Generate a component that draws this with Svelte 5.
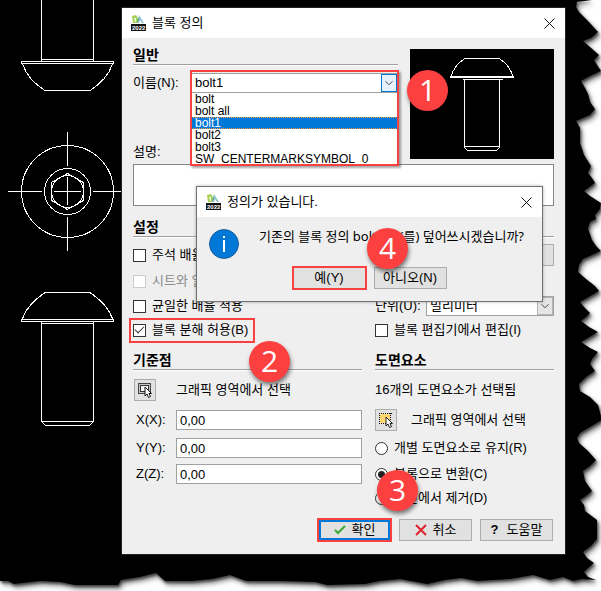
<script lang="ts">
  const blocks = ['bolt', 'bolt all', 'bolt1', 'bolt2', 'bolt3', 'SW_CENTERMARKSYMBOL_0'];
  const axes = ['X', 'Y', 'Z'];

  let name = $state('bolt1');
  let explode = $state(true);
  let mode = $state('convert');
  let base = $state({ X: '0,00', Y: '0,00', Z: '0,00' });
</script>

{#snippet logo()}
  <svg class="logo" viewBox="0 0 15 17" width="15" height="17" aria-hidden="true">
    <path d="M1 1l4-1q3 3 1 8H2z" fill="#a5d052" />
    <path d="M3 3l2 0 0 4-1 0z" fill="#eef7dc" />
    <path d="M8 0l5 8h-2l-2-3-1 3H6z" fill="#8fc3cf" />
    <path d="M7 2l1 3-2 3z" fill="#4da36b" />
    <rect x="0" y="9" width="15" height="7" fill="#111" />
    <text x="1" y="15" font-size="6" font-weight="700" fill="#fff">2022</text>
  </svg>
{/snippet}

{#snippet cross()}
  <svg viewBox="0 0 11 11" width="11" height="11" aria-hidden="true">
    <path d="M0.5 0.5l10 10M10.5 0.5l-10 10" stroke="#111" fill="none" />
  </svg>
{/snippet}

<main class="stage">
  <svg class="torn" viewBox="0 0 601 591" preserveAspectRatio="none" aria-hidden="true">
    <path
      d="M0 0H592L577 2 576 7 579 12 588 21 598 32 591 38 583 41 590 47 599 55 594 60 597 65 601 71 590 76 581 81 585 88 588 94 590 102 595 109 590 115 576 121 580 128 580 143 584 155 591 166 588 173 592 178 595 183 584 191 590 196 601 203 600 209 595 215 596 219 590 222 588 229 592 240 596 246 601 251 592 255 583 259 579 265 578 272 586 279 595 286 599 291 587 298 580 302 584 307 590 313 586 317 581 321 589 327 598 332 588 338 581 342 590 348 598 352 592 359 590 364 595 371 586 377 579 384 580 391 590 397 598 405 602 420 590 427 580 433 577 438 579 443 588 451 596 460 590 466 583 471 585 481 592 491 586 496 580 500 584 505 585 511 597 520 597 539 591 546 583 552 587 558 594 563 588 568 584 572 588 577 596 580 582 579 573 581 563 577 550 580 533 575 510 579 477 581 461 578 445 580 427 584 400 579 380 581 365 584 327 585 315 582 280 581 246 581 230 575 212 579 192 581 165 581 156 573 140 577 121 580 118 585 75 585 60 582 40 581 14 584 8 581H0z"
    />
  </svg>

  <svg class="drawing" viewBox="0 0 122 440" width="122" height="440" aria-hidden="true">
    <path d="M41.5 0V60.5M93.5 0V60.5M41 59.5H94M21.5 61.5H113.5V63.5H21.5zM22.5 64Q28 80 45 90.5H90Q107 80 112.5 64" />
    <circle cx="67.5" cy="191.5" r="46" />
    <circle cx="67.5" cy="191.5" r="23" />
    <circle cx="67.5" cy="191.5" r="16" />
    <path d="M67.5 173.5L83.5 182.5V200.5L67.5 209.5 51.5 200.5V182.5z" />
    <path d="M67.5 132V166M67.5 177V205M67.5 217V251M8 191.5H42M54 191.5H81M93 191.5H122" />
    <path d="M22.5 319Q26 306 45 292.5H90Q109 306 112.5 319M21.5 319.5H113.5V321.5H21.5zM41.5 321V421.5L45.5 425.5H89.5L93.5 421.5V321M41 323.5H94M41 421.5H94" />
  </svg>

  <section class="dialog" aria-label="블록 정의">
    <header class="titlebar">
      {@render logo()}
      <span>블록 정의</span>
      <button class="close" type="button" aria-label="닫기">{@render cross()}</button>
    </header>

    <div class="body">
      <div class="general">
        <div>
          <h2>일반</h2>
          <div class="name-row">
            <label for="name">이름(N):</label>
            <div class="combo">
              <select id="name" bind:value={name}>
                {#each blocks as block}
                  <option>{block}</option>
                {/each}
              </select>
              <svg class="arrow hot" viewBox="0 0 16 18" aria-hidden="true">
                <path d="M4 7l4 4 4-4" />
              </svg>
              <ul role="listbox" aria-label="이름">
                {#each blocks as block}
                  <li role="option" aria-selected={block === name}>{block}</li>
                {/each}
              </ul>
            </div>
          </div>
          <label class="desc-label" for="desc">설명:</label>
        </div>
        <svg class="preview" viewBox="0 0 144 110" aria-hidden="true">
          <path d="M41 28Q44 16 55 9.5H89Q100 16 103 28M53 29.5V30.5H92V29.5M54.5 31V98.5L57.5 101.5H86.5L89.5 98.5V31M54 97.5H90" />
          <path d="M40 28H104" stroke-width="2" />
        </svg>
      </div>
      <textarea id="desc"></textarea>

      <div class="columns settings">
        <div>
          <h2>설정</h2>
          <div class="rows">
            <label><input type="checkbox" />주석 배율</label>
            <label class="disabled"><input type="checkbox" disabled />시트와 일치</label>
            <label><input type="checkbox" />균일한 배율 적용</label>
            <label class="marked"><input type="checkbox" bind:checked={explode} />블록 분해 허용(B)</label>
          </div>
        </div>
        <div>
          <h2></h2>
          <div class="rows">
            <button class="push link" type="button" aria-label="하이퍼링크"></button>
            <span></span>
            <div class="unit">
              <label for="unit">단위(U):</label>
              <div class="combo">
                <select id="unit"><option>밀리미터</option></select>
                <svg class="arrow" viewBox="0 0 16 18" aria-hidden="true">
                  <path d="M4 7l4 4 4-4" />
                </svg>
              </div>
            </div>
            <label><input type="checkbox" />블록 편집기에서 편집(I)</label>
          </div>
        </div>
      </div>

      <div class="columns origin">
        <div>
          <h2>기준점</h2>
          <div class="rows">
            <div class="pick">
              <button class="push tool" type="button" aria-label="기준점 선택">
                <svg viewBox="0 0 16 16" width="16" height="16" aria-hidden="true">
                  <rect x="1.5" y="1.5" width="12" height="10" fill="#c4c8ca" stroke="#444" />
                  <rect x="3.5" y="3.5" width="8" height="6" fill="#f7f7f7" stroke="#333" />
                  <path d="M8 5v9l2-2 1.5 3.5 2-1-1.5-3h2.5z" fill="#fff" stroke="#111" />
                </svg>
              </button>
              <span>그래픽 영역에서 선택</span>
            </div>
            {#each axes as axis}
              <div class="axis">
                <label for={`axis-${axis}`}>{axis}({axis}):</label>
                <input id={`axis-${axis}`} type="text" bind:value={base[axis]} />
              </div>
            {/each}
          </div>
        </div>
        <div>
          <h2>도면요소</h2>
          <div class="rows">
            <p>16개의 도면요소가 선택됨</p>
            <div class="pick near">
              <button class="push tool" type="button" aria-label="도면요소 선택">
                <svg viewBox="0 0 16 16" width="16" height="16" aria-hidden="true">
                  <rect x="2" y="2" width="10" height="9" fill="#ffd76e" />
                  <path d="M1 1.5H14M1 11.5H14M1.5 1V12M12.5 1V12" fill="none" stroke="#111" stroke-dasharray="1 1" shape-rendering="crispEdges" />
                  <path d="M8 5v9l2-2 1.5 3.5 2-1-1.5-3h2.5z" fill="#fff" stroke="#222" />
                </svg>
              </button>
              <span>그래픽 영역에서 선택</span>
            </div>
            <label><input type="radio" value="keep" bind:group={mode} />개별 도면요소로 유지(R)</label>
            <label><input type="radio" value="convert" bind:group={mode} />블록으로 변환(C)</label>
            <label><input type="radio" value="remove" bind:group={mode} />도면에서 제거(D)</label>
          </div>
        </div>
      </div>

      <footer>
        <button class="push primary" type="button">
          <svg viewBox="0 0 12 10" width="12" height="10" aria-hidden="true">
            <path d="M1 5l3 3 7-7" fill="none" stroke="#3aa935" stroke-width="2" />
          </svg>
          확인
        </button>
        <button class="push" type="button">
          <svg viewBox="0 0 12 12" width="12" height="12" aria-hidden="true">
            <path d="M1 1l10 10M11 1L1 11" stroke="#e1202c" stroke-width="2" />
          </svg>
          취소
        </button>
        <button class="push" type="button"><b>?</b>도움말</button>
      </footer>
    </div>

    <section class="confirm" role="alertdialog" aria-label="정의가 있습니다.">
      <header class="titlebar">
        {@render logo()}
        <span>정의가 있습니다.</span>
        <button class="close" type="button" aria-label="닫기">{@render cross()}</button>
      </header>
      <div class="message">
        <svg viewBox="0 0 30 30" width="30" height="30" aria-hidden="true">
          <circle cx="15" cy="15" r="14.5" fill="#0078d7" stroke="#1c5f9c" />
          <path d="M14 7h2v2h-2zM14 11h2v12h-2z" fill="#fff" />
        </svg>
        <p>기존의 블록 정의 bolt1 을(를) 덮어쓰시겠습니까?</p>
      </div>
      <div class="answers">
        <button class="push yes" type="button">예(Y)</button>
        <button class="push" type="button">아니오(N)</button>
      </div>
    </section>

    <span class="badge one">1</span>
    <span class="badge two">2</span>
    <span class="badge three">3</span>
    <span class="badge four">4</span>
  </section>
</main>

<style>
  :global(body) {
    margin: 0;
    background: #fff;
  }

  .stage {
    position: relative;
    overflow: hidden;
    padding: 8px 36px 37px 122px;
    font: 13px/20px "Liberation Sans", "Noto Sans CJK KR", sans-serif;
    color: #000;
  }

  .stage *,
  .stage *::after {
    box-sizing: border-box;
  }

  .torn {
    position: absolute;
    inset: 0;
    width: 100%;
    height: 100%;
    filter: drop-shadow(1px 2px 1px rgb(0 0 0 / 50%)) drop-shadow(2px 3px 2px rgb(0 0 0 / 50%));
  }

  .drawing {
    position: absolute;
    left: 0;
    top: 0;
  }

  .drawing,
  .preview {
    fill: none;
    stroke: #fff;
    shape-rendering: crispEdges;
  }

  .dialog {
    position: relative;
    background: #efefef;
    box-shadow: 0 0 0 1px #222;
  }

  .titlebar {
    display: flex;
    align-items: center;
    gap: 6px;
    height: 30px;
    padding: 0 10px 0 9px;
    background: #fff;
    white-space: nowrap;
  }

  .close {
    display: flex;
    margin-left: auto;
    padding: 0;
    border: 0;
    background: none;
  }

  .body {
    padding: 9px 11px 13px;
  }

  h2 {
    height: 18px;
    margin: 0;
    border-bottom: 1px solid #a0a0a0;
    box-shadow: 0 1px #fff;
    font-size: 14px;
    line-height: 16px;
    font-weight: 700;
  }

  p {
    margin: 0;
  }

  label {
    white-space: nowrap;
  }

  .general {
    display: grid;
    grid-template-columns: 1fr 144px;
    gap: 12px;
  }

  .preview {
    width: 144px;
    height: 110px;
    margin-top: 2px;
    background: #000;
  }

  .name-row {
    display: grid;
    grid-template-columns: 58px 1fr;
    margin-top: 8px;
  }

  .combo {
    position: relative;
    height: 20px;
  }

  .name-row .combo::after {
    content: '';
    position: absolute;
    z-index: 2;
    inset: -3px -1px -73px;
    border: 2px solid #fa4040;
    box-shadow: 2px 2px 2px rgb(0 0 0 / 35%);
    pointer-events: none;
  }

  select,
  input[type='text'],
  textarea {
    display: block;
    width: 100%;
    height: 20px;
    margin: 0;
    padding: 0 3px;
    border: 1px solid #a0a0a0;
    border-radius: 0;
    background: #fff;
    color: inherit;
    font: inherit;
    line-height: 18px;
    appearance: none;
  }

  textarea {
    height: 42px;
    margin-top: 2px;
    border-color: #85858d;
    resize: none;
  }

  .arrow {
    position: absolute;
    top: 1px;
    right: 1px;
    width: 16px;
    height: 18px;
    border: 1px solid #b5b5b5;
    background: #e5e5e5;
    fill: none;
    stroke: #333;
    pointer-events: none;
  }

  .arrow.hot {
    border-color: #0078d7;
    background: #e5f1fb;
  }

  ul {
    position: absolute;
    z-index: 1;
    top: 20px;
    left: 0;
    right: 0;
    margin: 0;
    padding: 0;
    background: #fff;
    list-style: none;
    font-size: 12px;
    line-height: 12px;
  }

  li {
    height: 12px;
    padding-left: 4px;
  }

  li[aria-selected='true'] {
    background: #0078d7;
    outline: 1px dotted #ff9a3c;
    outline-offset: -1px;
    color: #fff;
  }

  .desc-label {
    display: block;
    margin-top: 49px;
  }

  .columns {
    display: grid;
    grid-template-columns: 229fr 179fr;
    gap: 13px;
  }

  .settings {
    margin-top: 13px;
  }

  .origin {
    margin-top: 10px;
  }

  .rows {
    display: grid;
    padding-top: 5px;
    align-items: center;
  }

  .settings .rows {
    grid-template-rows: 26px 26px 24px 24px;
  }

  .origin .rows {
    grid-template-rows: 30px 30px 26px 26px 22px;
  }

  .rows > label {
    display: flex;
    align-items: center;
    gap: 6px;
  }

  .disabled {
    color: #8c8c8c;
  }

  .marked {
    position: relative;
  }

  .marked::after {
    content: '';
    position: absolute;
    inset: -2px auto -3px -4px;
    width: 126px;
    border: 2px solid #fa4040;
  }

  input[type='checkbox'],
  input[type='radio'] {
    display: grid;
    place-items: center;
    flex: none;
    width: 13px;
    height: 13px;
    margin: 0;
    border: 1px solid #333;
    background: #fff;
    appearance: none;
  }

  input[type='radio'] {
    border-radius: 50%;
  }

  input[type='checkbox']:disabled {
    border-color: #ccc;
  }

  input[type='checkbox']:checked::after {
    content: '';
    width: 9px;
    height: 5px;
    margin-bottom: 3px;
    border: solid #333;
    border-width: 0 0 1px 1px;
    transform: rotate(-45deg);
  }

  input[type='radio']:checked::after {
    content: '';
    width: 7px;
    height: 7px;
    border-radius: 50%;
    background: #222;
  }

  .push {
    display: flex;
    align-items: center;
    justify-content: center;
    gap: 6px;
    width: 73px;
    height: 22px;
    padding: 0;
    border: 1px solid #adadad;
    background: #e1e1e1;
    color: inherit;
    font: inherit;
    white-space: nowrap;
  }

  .push b {
    margin-right: 2px;
  }

  .link {
    justify-self: end;
  }

  .unit {
    display: grid;
    grid-template-columns: 51px 1fr;
  }

  .pick {
    display: flex;
    align-items: center;
    gap: 20px;
    padding-left: 1px;
  }

  .pick.near {
    gap: 14px;
    padding-left: 0;
  }

  .tool {
    width: 22px;
  }

  .axis {
    display: grid;
    grid-template-columns: 40px 1fr;
    padding-left: 3px;
  }

  footer {
    display: flex;
    justify-content: flex-end;
    gap: 8px;
    margin-top: 10px;
    padding-right: 1px;
  }

  .primary,
  .yes {
    outline: 2px solid #fa4040;
    outline-offset: -1px;
  }

  .primary {
    box-shadow: inset 0 0 0 2px #0078d7;
  }

  .confirm {
    position: absolute;
    z-index: 3;
    top: 178px;
    left: 74px;
    right: 22px;
    padding-bottom: 12px;
    border: 1px solid #707070;
    background: #efefef;
    box-shadow: 0 0 3px rgb(0 0 0 / 30%);
  }

  .message {
    display: flex;
    gap: 20px;
    padding: 9px 12px 8px;
    font-family: "Noto Sans", "Noto Sans CJK KR", sans-serif;
    white-space: nowrap;
  }

  .message svg {
    margin-top: 3px;
  }

  .answers {
    display: flex;
    justify-content: center;
    gap: 8px;
  }

  .badge {
    position: absolute;
    z-index: 4;
    width: 41px;
    height: 41px;
    border-radius: 50%;
    background: #fc4040;
    box-shadow: 1px 3px 4px rgb(0 0 0 / 50%);
    color: #fff;
    font: 500 30px/40px "Open Sans", sans-serif;
    text-align: center;
  }

  .one {
    top: 62px;
    left: 285px;
  }

  .two {
    top: 333px;
    left: 127px;
  }

  .three {
    top: 462px;
    left: 255px;
  }

  .four {
    top: 220px;
    left: 245px;
  }
</style>
